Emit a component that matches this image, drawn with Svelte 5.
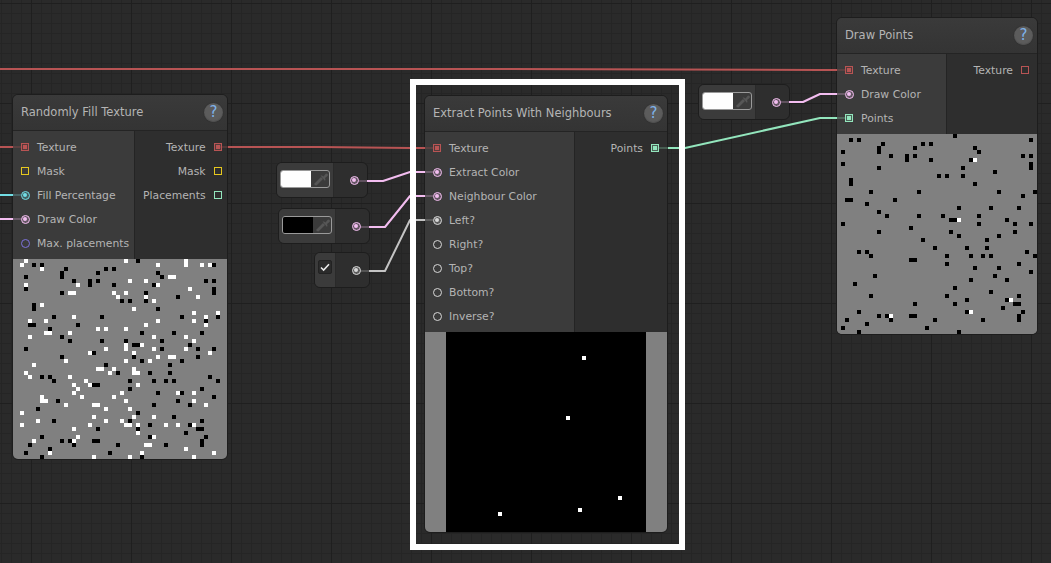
<script>
  // cells of the 50x50 preview textures, as "col,row" with col from 5 and row from 1
  const black = `8,2 10,2 34,1 53,2 16,3 26,3 28,3 15,4 15,5 24,4 39,4 6,5 40,5 18,6 22,6 22,7 24,6 51,6 53,6 28,7 38,7 6,8 53,8 53,9 15,9 36,9 44,10 30,11 32,11 36,11 8,12 8,13 39,13 13,15 25,15 45,15 54,15 51,16 7,17 8,17 19,17 12,18 35,19 43,19 50,19 15,20 17,21 25,21 31,21 40,21 33,22 34,22 47,22 6,23 40,23 49,23 53,23 23,24 15,25 33,25 49,25 35,26 45,26 26,27 42,27 29,29 37,29 42,29 10,30 12,30 52,30 13,31 32,31 38,31 41,31 43,31 54,31 23,32 24,32 32,33 50,33 39,34 45,34 53,35 14,36 44,36 38,37 47,37 9,38 34,39 43,40 13,41 32,41 50,41 37,42 47,42 24,43 34,43 49,43 50,43 46,44 10,45 37,45 51,45 15,46 17,46 23,46 24,46 50,46 50,47 7,47 18,47 29,47 41,47 12,48 6,49 27,49 10,50 35,50`;
  const white = `6,1 5,2 10,3 31,1 39,2 46,1 46,2 50,2 52,2 42,5 43,5 32,6 36,6 19,7 6,7 39,7 47,8 17,9 18,9 28,9 31,9 29,10 36,10 49,10 38,11 10,12 33,13 48,14 54,14 18,15 51,15 7,16 11,16 39,16 48,16 36,17 51,17 24,18 26,18 31,18 11,19 12,19 17,19 7,20 38,20 46,20 48,21 35,22 31,22 31,23 26,23 38,23 46,23 22,24 33,24 52,24 39,25 42,25 43,25 16,26 31,26 37,26 8,27 24,28 25,28 28,28 33,28 6,29 27,29 33,29 34,29 7,30 17,30 21,31 18,32 22,32 34,32 19,33 18,34 30,34 44,34 48,34 10,35 20,35 28,35 10,36 11,36 31,36 48,36 16,37 23,37 24,37 51,37 26,38 32,38 5,39 23,40 33,40 38,40 9,41 26,41 30,41 5,42 22,42 31,42 32,42 34,42 41,42 44,42 48,42 18,43 34,44 19,45 38,45 8,46 18,46 36,47 37,47 46,48 12,49 35,49 53,49 23,50 32,50 48,50`;
  const cells = (s, dx, dy) => s.split(/\s+/).map((c) => {
    const [x, y] = c.split(',').map(Number);
    return { x: x - dx, y: y - dy };
  });

  const red = '#b85454', yellow = '#e6c81e', green = '#93e6bd', cyan = '#72dde4', pink = '#f3bdf0', pale = '#d8d8d8', violet = '#7d72dc';
  const paleWire = '#c4c4c4';

  const nodes = [
    {
      title: 'Randomly Fill Texture', x: 12, y: 94, w: 216, split: 122,
      inputs: [
        { label: 'Texture', kind: 'square', color: red, on: true },
        { label: 'Mask', kind: 'square', color: yellow },
        { label: 'Fill Percentage', kind: 'round', color: cyan, on: true },
        { label: 'Draw Color', kind: 'round', color: pink, on: true },
        { label: 'Max. placements', kind: 'round', color: violet }
      ],
      outputs: [
        { label: 'Texture', kind: 'square', color: red, on: true },
        { label: 'Mask', kind: 'square', color: yellow },
        { label: 'Placements', kind: 'square', color: green }
      ],
      bg: '#808080',
      pixels: [{ fill: '#000', list: cells(black, 5, 1) }, { fill: '#fff', list: cells(white, 5, 1) }]
    },
    {
      title: 'Extract Points With Neighbours', x: 424, y: 95, w: 244, split: 150,
      inputs: [
        { label: 'Texture', kind: 'square', color: red, on: true },
        { label: 'Extract Color', kind: 'round', color: pink, on: true },
        { label: 'Neighbour Color', kind: 'round', color: pink, on: true },
        { label: 'Left?', kind: 'round', color: pale, on: true },
        { label: 'Right?', kind: 'round', color: pale },
        { label: 'Top?', kind: 'round', color: pale },
        { label: 'Bottom?', kind: 'round', color: pale },
        { label: 'Inverse?', kind: 'round', color: pale }
      ],
      outputs: [{ label: 'Points', kind: 'square', color: green, on: true }],
      bg: '#000',
      pixels: [{ fill: '#fff', list: cells('34,6 30,21 43,41 33,44 13,45', 0, 0) }]
    },
    {
      title: 'Draw Points', x: 836, y: 17, w: 202, split: 110,
      inputs: [
        { label: 'Texture', kind: 'square', color: red, on: true },
        { label: 'Draw Color', kind: 'round', color: pink, on: true },
        { label: 'Points', kind: 'square', color: green, on: true }
      ],
      outputs: [{ label: 'Texture', kind: 'square', color: red }],
      bg: '#808080',
      pixels: [
        { fill: '#000', list: cells(black, 5, 1) },
        { fill: '#fff', list: cells('39,7 35,22 48,42 38,45 18,46', 5, 1) }
      ]
    }
  ];

  const values = [
    { x: 276, y: 162, w: 92, left: 57, type: 'color', fill: '#fff', color: pink },
    { x: 278, y: 208, w: 92, left: 57, type: 'color', fill: '#000', color: pink },
    { x: 314, y: 252, w: 56, left: 21, type: 'check', color: pale },
    { x: 698, y: 84, w: 92, left: 57, type: 'color', fill: '#fff', color: pink }
  ];

  const wires = [
    { c: red, p: '0,69 500,69 820,70 837,70' },
    { c: red, p: '0,147 13,147' },
    { c: red, p: '228,147 320,147 410,148 425,148' },
    { c: cyan, p: '0,195 13,195' },
    { c: pink, p: '0,219 13,219' },
    { c: pink, p: '367,181 383,181 410,172 425,172' },
    { c: pink, p: '369,227 385,227 410,196 425,196' },
    { c: paleWire, p: '369,271 385,271 410,220 425,220' },
    { c: pink, p: '789,102 803,102 820,94 837,94' },
    { c: green, p: '668,148 685,148 820,118 837,118' }
  ];

  // dim pieces between a node's edge and its port
  const stubs = [
    { c: red, p: '13,147 21,147' }, { c: cyan, p: '13,195 21,195' }, { c: pink, p: '13,219 21,219' },
    { c: red, p: '219,147 228,147' },
    { c: red, p: '425,148 433,148' }, { c: pink, p: '425,172 433,172' }, { c: pink, p: '425,196 433,196' }, { c: paleWire, p: '425,220 433,220' },
    { c: green, p: '659,148 668,148' },
    { c: red, p: '837,70 845,70' }, { c: pink, p: '837,94 845,94' }, { c: green, p: '837,118 845,118' },
    { c: pink, p: '358,181 367,181' }, { c: pink, p: '360,227 369,227' }, { c: paleWire, p: '360,271 369,271' }, { c: pink, p: '780,102 789,102' }
  ];
</script>

{#snippet port(item)}
  <span class="port {item.kind}" class:on={item.on} style="color:{item.color}"><i></i></span>
{/snippet}

<div class="canvas">
  {#each nodes as n}
    <section class="node" style="left:{n.x}px;top:{n.y}px;width:{n.w}px">
      <header>
        <h2>{n.title}</h2>
        <span class="help">?</span>
      </header>
      <div class="ports">
        <div class="inputs" style="width:{n.split}px">
          {#each n.inputs as item}
            <div class="row">{@render port(item)}<span class="label">{item.label}</span></div>
          {/each}
        </div>
        <div class="outputs">
          {#each n.outputs as item}
            <div class="row right"><span class="label">{item.label}</span>{@render port(item)}</div>
          {/each}
        </div>
      </div>
      <div class="preview">
        <svg width="200" height="200" viewBox="0 0 50 50" shape-rendering="crispEdges">
          <rect width="50" height="50" fill={n.bg} />
          {#each n.pixels as group}
            {#each group.list as c}
              <rect x={c.x} y={c.y} width="1" height="1" fill={group.fill} />
            {/each}
          {/each}
        </svg>
      </div>
    </section>
  {/each}

  {#each values as v}
    <section class="value" style="left:{v.x}px;top:{v.y}px;width:{v.w}px">
      <div class="field" style="width:{v.left}px">
        {#if v.type === 'color'}
          <div class="swatch">
            <span class="fill" style="background:{v.fill}"></span>
            <svg class="dropper" width="18" height="16" viewBox="0 0 18 16">
              <path d="M3.5 14 L3.5 12.5 L10 6 L12 8 L5.5 14.5 Z" fill="#565656" />
              <path d="M9.5 4.5 L11 4.5 L12.5 5.5 L14.5 3 Q15.5 2 16.5 3 Q17.5 4 16.5 5 L14 7 L14.5 8.5 L14 10 Z" fill="#565656" />
            </svg>
          </div>
        {:else}
          <div class="check">
            <svg width="12" height="12" viewBox="0 0 12 12">
              <path d="M2 6.5 L4.6 9 L10 3.2" fill="none" stroke="#e8e8e8" stroke-width="1.6" />
            </svg>
          </div>
        {/if}
      </div>
      <div class="out">{@render port({ kind: 'round', color: v.color, on: true })}</div>
    </section>
  {/each}

  <svg class="wires" width="1051" height="563">
    {#each wires as w}
      <polyline points={w.p} stroke={w.c} />
    {/each}
    {#each stubs as s}
      <polyline points={s.p} stroke={s.c} opacity="0.25" />
    {/each}
  </svg>

  <div class="frame"></div>
</div>

<style>
  :global(body) {
    margin: 0;
    background: #282828;
  }
  .canvas {
    position: relative;
    width: 1051px;
    height: 563px;
    overflow: hidden;
    font-family: "DejaVu Sans", sans-serif;
    color: #b4b4b4;
    background-color: #2a2a2a;
    background-image:
      linear-gradient(to right, #1f1f1f 1px, transparent 1px),
      linear-gradient(to bottom, #1f1f1f 1px, transparent 1px),
      linear-gradient(to right, #252525 1px, transparent 1px),
      linear-gradient(to bottom, #252525 1px, transparent 1px);
    background-size: 100px 100px, 100px 100px, 10px 10px, 10px 10px;
    background-position: 31px 3px, 31px 3px, 1px 3px, 1px 3px;
  }
  .node {
    position: absolute;
    display: flex;
    flex-direction: column;
    box-sizing: border-box;
    border: 1px solid #1d1d1d;
    border-radius: 6px;
    overflow: hidden;
    background: #2e2e2e;
  }
  header {
    display: flex;
    align-items: center;
    justify-content: space-between;
    height: 36px;
    box-sizing: border-box;
    padding: 0 4px 0 8px;
    background: linear-gradient(#3a3a3a, #343434);
    border-bottom: 1px solid #242424;
  }
  h2 {
    margin: 0 0 2px;
    font-size: 11.5px;
    font-weight: normal;
    color: #b4b4b4;
    white-space: nowrap;
  }
  .help {
    width: 19px;
    height: 19px;
    border-radius: 50%;
    background: #5c5c5c;
    box-shadow: inset 0 -1px 1px #4e4e4e, 0 0 1px #222;
    color: #7fb3ea;
    font-size: 15px;
    line-height: 19px;
    text-align: center;
  }
  .ports {
    display: flex;
  }
  .inputs {
    padding: 4px 0;
    background: #3b3b3b;
    border-right: 1px solid #242424;
    box-sizing: border-box;
  }
  .outputs {
    flex: 1;
    padding: 4px 0;
    background: #2e2e2e;
  }
  .row {
    display: flex;
    align-items: center;
    gap: 8px;
    height: 24px;
    padding: 0 8px;
    font-size: 10.8px;
    white-space: nowrap;
  }
  .row.right {
    justify-content: flex-end;
  }
  .port {
    display: flex;
    align-items: center;
    justify-content: center;
    flex: none;
    box-sizing: border-box;
    width: 8px;
    height: 8px;
    border: 1px solid currentColor;
  }
  .port.round {
    width: 9px;
    height: 9px;
    margin: 0 -0.5px;
    border-width: 1.5px;
    border-radius: 50%;
  }
  .port.on {
    background: color-mix(in srgb, currentColor 25%, #333);
  }
  .port i {
    display: none;
    width: 4px;
    height: 4px;
    flex: none;
    background: currentColor;
  }
  .port.round i {
    border-radius: 50%;
  }
  .port.on i {
    display: block;
  }
  .preview {
    display: flex;
    justify-content: center;
    background: #808080;
  }
  .preview svg {
    display: block;
  }
  .value {
    position: absolute;
    display: flex;
    box-sizing: border-box;
    height: 36px;
    border: 1px solid #1d1d1d;
    border-radius: 6px;
    overflow: hidden;
    background: #2e2e2e;
  }
  .field {
    flex: none;
    box-sizing: border-box;
    padding: 7px 0 0 3px;
    background: #3b3b3b;
    border-right: 1px solid #2a2a2a;
  }
  .swatch {
    display: flex;
    position: relative;
    box-sizing: border-box;
    width: 50px;
    height: 18px;
    border: 1px solid #9a9a9a;
    border-radius: 3px;
    overflow: hidden;
  }
  .fill {
    width: 30px;
  }
  .dropper {
    display: block;
  }
  .check {
    display: flex;
    align-items: center;
    justify-content: center;
    box-sizing: border-box;
    width: 14px;
    height: 14px;
    border: 1px solid #222;
    border-radius: 2px;
    background: #2b2b2b;
  }
  .out {
    flex: 1;
    display: flex;
    align-items: center;
    justify-content: flex-end;
    padding-right: 9px;
  }
  .wires {
    position: absolute;
    left: 0;
    top: 0;
    fill: none;
    stroke-width: 2;
    stroke-linejoin: round;
  }
  .frame {
    position: absolute;
    left: 410px;
    top: 79px;
    width: 275px;
    height: 471px;
    box-sizing: border-box;
    border: 6px solid #fff;
  }
</style>
